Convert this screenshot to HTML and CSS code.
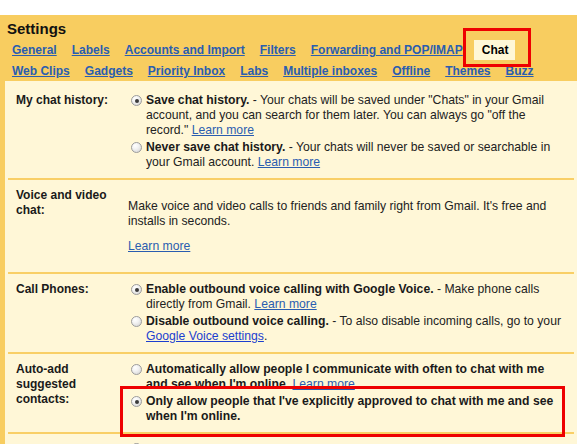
FILE: index.html
```html
<!DOCTYPE html>
<html>
<head>
<meta charset="utf-8">
<title>Settings - Chat</title>
<link rel="stylesheet" href="styles.css">
</head>
<body>
<div class="page">
  <div class="header">
    <h1 class="title">Settings</h1>
    <nav class="tabs">
      <div class="tab-row">
        <a class="tab" href="#">General</a>
        <a class="tab" href="#">Labels</a>
        <a class="tab" href="#">Accounts and Import</a>
        <a class="tab" href="#">Filters</a>
        <a class="tab" href="#">Forwarding and POP/IMAP</a>
        <span class="tab tab-current">Chat</span>
      </div>
      <div class="tab-row">
        <a class="tab" href="#">Web Clips</a>
        <a class="tab" href="#">Gadgets</a>
        <a class="tab" href="#">Priority Inbox</a>
        <a class="tab" href="#">Labs</a>
        <a class="tab" href="#">Multiple inboxes</a>
        <a class="tab" href="#">Offline</a>
        <a class="tab" href="#">Themes</a>
        <a class="tab" href="#">Buzz</a>
      </div>
    </nav>
  </div>

  <div class="panel">
    <div class="row row-first">
      <div class="label">My chat history:</div>
      <div class="content">
        <div class="option">
          <span class="radio checked"></span>
          <span class="option-text"><b>Save chat history.</b> - Your chats will be saved under "Chats" in your Gmail account, and you can search for them later. You can always go "off the record." <a class="link" href="#">Learn more</a></span>
        </div>
        <div class="option">
          <span class="radio"></span>
          <span class="option-text"><b>Never save chat history.</b> - Your chats will never be saved or searchable in your Gmail account. <a class="link" href="#">Learn more</a></span>
        </div>
      </div>
    </div>

    <div class="row">
      <div class="label">Voice and video chat:</div>
      <div class="content content-voice">
        <p class="para">Make voice and video calls to friends and family right from Gmail. It's free and installs in seconds.</p>
        <p class="para"><a class="link" href="#">Learn more</a></p>
      </div>
    </div>

    <div class="row">
      <div class="label">Call Phones:</div>
      <div class="content">
        <div class="option">
          <span class="radio checked"></span>
          <span class="option-text"><b>Enable outbound voice calling with Google Voice.</b> - Make phone calls directly from Gmail. <a class="link" href="#">Learn more</a></span>
        </div>
        <div class="option">
          <span class="radio"></span>
          <span class="option-text"><b>Disable outbound voice calling.</b> - To also disable incoming calls, go to your <a class="link link-strong" href="#">Google Voice settings</a>.</span>
        </div>
      </div>
    </div>

    <div class="row">
      <div class="label">Auto-add suggested contacts:</div>
      <div class="content">
        <div class="option">
          <span class="radio"></span>
          <span class="option-text"><b>Automatically allow people I communicate with often to chat with me and see when I'm online.</b> <a class="link" href="#">Learn more</a></span>
        </div>
        <div class="option">
          <span class="radio checked"></span>
          <span class="option-text"><b>Only allow people that I've explicitly approved to chat with me and see when I'm online.</b></span>
        </div>
      </div>
    </div>

    <div class="row row-next">
      <div class="label"></div>
      <div class="content">
        <div class="option">
          <span class="radio"></span>
        </div>
      </div>
    </div>
  </div>
</div>

<div class="mark mark-chat"></div>
<div class="mark mark-contacts"></div>
</body>
</html>
```

FILE: styles.css
```css
html, body {
  margin: 0;
  padding: 0;
  background: #ffffff;
}

body {
  font-family: "Liberation Sans", Arial, sans-serif;
  color: #222222;
}

.page {
  margin-top: 15px;
  background: #f8cd60;
}

.header {
  padding: 4px 0 0 0;
}

.title {
  margin: 0;
  padding-left: 7px;
  font-size: 15px;
  line-height: 20px;
  font-weight: bold;
  color: #111111;
}

.tabs {
  display: flex;
  flex-direction: column;
  gap: 1px;
  margin-top: 1px;
  padding-left: 8px;
}

.tab-row {
  display: flex;
  gap: 7px;
  height: 20px;
  white-space: nowrap;
}

.tab {
  padding: 0 4px;
  font-size: 12px;
  line-height: 20px;
  font-weight: bold;
  color: #2a5db0;
  text-decoration: underline;
}

.tab-current {
  padding: 0 7px 0 8px;
  background: #fff7d7;
  color: #000000;
  text-decoration: none;
}

.panel {
  margin-left: 5px;
  background: #fff7d7;
  padding: 0 3px;
}

.row {
  display: grid;
  grid-template-columns: 120px 1fr;
  padding: 8px 0 8px 0;
  border-bottom: 2px solid #f9cf66;
}

.row-first {
  padding-top: 12px;
}

.row-next {
  padding-top: 7px;
  border-bottom: none;
}

.label {
  padding: 0 8px;
  font-size: 12px;
  line-height: 15px;
  font-weight: bold;
  color: #1a1a1a;
}

.content {
  padding-right: 7px;
  font-size: 12.2px;
  line-height: 15px;
}

.content-voice {
  margin-top: 11px;
}

.para {
  margin: 0 0 10px 0;
}

.option {
  display: flex;
  align-items: flex-start;
  min-height: 15px;
}

.option + .option {
  margin-top: 2px;
}

.radio {
  flex: none;
  box-sizing: border-box;
  width: 11px;
  height: 11px;
  margin: 2px 4px 0 3px;
  border: 1px solid #9c9c9c;
  border-radius: 50%;
  background: radial-gradient(circle at 35% 30%, #ffffff 0%, #f2f2f2 40%, #cfcfcf 100%);
  position: relative;
}

.radio.checked::after {
  content: "";
  position: absolute;
  left: 2.5px;
  top: 2.5px;
  width: 4px;
  height: 4px;
  border-radius: 50%;
  background: #3a3a3a;
}

.option-text b {
  color: #1a1a1a;
}

.link {
  color: #2a5db0;
  text-decoration: underline;
}

.link-strong {
  color: #1c3fd0;
}

.mark {
  position: absolute;
  box-sizing: border-box;
  border: 3px solid #ee0000;
  pointer-events: none;
}

.mark-chat {
  left: 463px;
  top: 28px;
  width: 68px;
  height: 39px;
}

.mark-contacts {
  left: 120px;
  top: 386px;
  width: 445px;
  height: 51px;
}
```
